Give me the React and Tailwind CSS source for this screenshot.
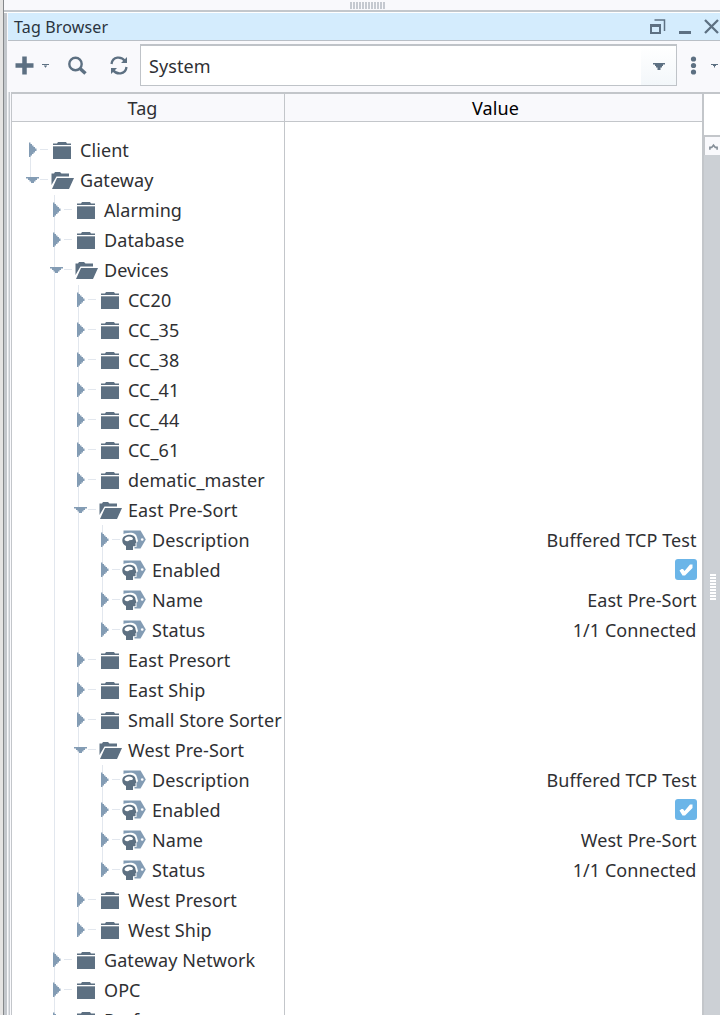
import React from "react";

const rows = [
  [0, "f", "Client"],
  [0, "o", "Gateway"],
  [1, "f", "Alarming"],
  [1, "f", "Database"],
  [1, "o", "Devices"],
  [2, "f", "CC20"],
  [2, "f", "CC_35"],
  [2, "f", "CC_38"],
  [2, "f", "CC_41"],
  [2, "f", "CC_44"],
  [2, "f", "CC_61"],
  [2, "f", "dematic_master"],
  [2, "o", "East Pre-Sort"],
  [3, "t", "Description", "Buffered TCP Test"],
  [3, "t", "Enabled", true],
  [3, "t", "Name", "East Pre-Sort"],
  [3, "t", "Status", "1/1 Connected"],
  [2, "f", "East Presort"],
  [2, "f", "East Ship"],
  [2, "f", "Small Store Sorter"],
  [2, "o", "West Pre-Sort"],
  [3, "t", "Description", "Buffered TCP Test"],
  [3, "t", "Enabled", true],
  [3, "t", "Name", "West Pre-Sort"],
  [3, "t", "Status", "1/1 Connected"],
  [2, "f", "West Presort"],
  [2, "f", "West Ship"],
  [1, "f", "Gateway Network"],
  [1, "f", "OPC"],
  [1, "f", "Performance"],
];

function Icon({ kind }) {
  if (kind === "f")
    return (
      <svg width="24" height="30" viewBox="0 0 24 30" className="block shrink-0">
        <path d="M3 8.500h4l1-1.500h8l1 1.500h4V10H3z" fill="#5d7082" />
        <path d="M3 11.300h18V24H3z" fill="#5d7082" />
      </svg>
    );
  if (kind === "o")
    return (
      <svg width="24" height="30" viewBox="0 0 24 30" className="block shrink-0">
        <path d="M1.500 20V8.500H4L5 7h5l1.500 1.500H19V11.500H6.500z" fill="#5d7082" />
        <path d="M7 13h17l-5 11H2z" fill="#5d7082" />
      </svg>
    );
  return (
    <svg width="24" height="30" viewBox="0 0 24 30" className="block shrink-0">
      <path d="M1.500 5.500H18.500L23.800 14.500 18.500 23.500H1.500z" fill="#839cb4" />
      <circle cx="20.200" cy="14.500" r="1.300" fill="#fff" />
      <path d="M0 9.500C3 8 10 6.500 13 9c2 1.500 2 4 3 7l-1.500 2v4h-2V26H0z" fill="#fff" />
      <path d="M4 25v-4C1.500 20 .3 18 .3 15.500.3 12 3.500 9.800 7.500 9.800c4 0 6 2.200 6 4.700l1 3-1 .8v3H11V25z" fill="#5d7082" />
      <path d="M2.500 15C2.500 13 4.500 11.500 7 11.500c2.500 0 4 1 4 2.300-.3 1.500-2 1.400-3.700 1.400-.8 1.500-3 1.500-4.800-.2z" fill="#fff" />
    </svg>
  );
}

function Branch({ open, first, last }) {
  return (
    <svg width="24" height="30" viewBox="0 0 24 30" className="block shrink-0">
      <path d={first ? "M4.500 15V30" : last ? "M4.500 0V15" : "M4.500 0V30"} stroke="#e2e7ee" />
      <path d="M14 14.500h8" stroke="#e2e7ee" />
      {open ? (
        <path d="M0 12h13v1.500h-2V15H9.500v1.500H8V18H5v-1.500H3.500V15H2v-1.500H0z" fill="#839cb4" />
      ) : (
        <path d="M3 7.500h1.500V9H6v1.500h1.500V12H9v1.500h1.500V16H9v1.500H7.500V19H6v1.500H4.500V22H3z" fill="#839cb4" />
      )}
    </svg>
  );
}

function Row({ index, row }) {
  const [depth, kind, label, value] = row;
  const continues = (level) => {
    for (let i = index + 1; i < rows.length; i++) {
      if (rows[i][0] < level) return false;
      if (rows[i][0] === level) return true;
    }
    return false;
  };
  const last = index < rows.length - 1 && !continues(depth);
  return (
    <div className="flex h-[30px] shrink-0">
      <div className="flex w-[272px] shrink-0 overflow-hidden pl-[14px]">
        {Array.from({ length: depth }, (_, level) => (
          <svg key={level} width="24" height="30" viewBox="0 0 24 30" className="block shrink-0">
            {continues(level) && <path d="M4.500 0V30" stroke="#e2e7ee" />}
          </svg>
        ))}
        <Branch open={kind === "o"} first={index === 0} last={last} />
        <Icon kind={kind} />
        <span className="pl-[6px] text-[18px] leading-[30px] tracking-[0.08px] whitespace-nowrap">{label}</span>
      </div>
      <div className="flex min-w-0 flex-1 items-center justify-end border-l border-[#c3c6ca] pr-[5.500px] text-[18px] leading-[30px] tracking-[0.06px]">
        {value === true ? (
          <svg width="22" height="22" viewBox="0 0 22 22" className="-mr-[0.500px] block">
            <rect width="22" height="21" rx="3" fill="#6bb5e8" />
            <path d="M4.500 11.500l2-1.500H8l1.500 2L15 5.500h2.500V9L10 16.500H7.500z" fill="#fff" />
          </svg>
        ) : (
          value
        )}
      </div>
    </div>
  );
}

function TitleBar() {
  return (
    <div className="flex h-[28px] shrink-0 items-center justify-between border-b border-[#b9bfc6] bg-[#d4ecfd] pl-[6px]">
      <span className="text-[16px] leading-[28px] tracking-[0.15px] text-[#2b3440]">Tag Browser</span>
      <svg width="72" height="28" viewBox="648 13 72 28" className="block" fill="none" stroke="#5d7082">
        <path d="M654.500 20h10v11" strokeWidth="1.500" />
        <path d="M651 25.500h9v7.500h-9z" strokeWidth="2" />
        <path d="M650 25.500h11" strokeWidth="3" />
        <path d="M679 32.500h12" strokeWidth="3" />
        <path d="M705 20l13 13M718 20l-13 13" strokeWidth="2.300" />
      </svg>
    </div>
  );
}

function Toolbar() {
  return (
    <div className="flex h-[51px] shrink-0 bg-[#f9f9fc]">
      <svg width="132" height="51" viewBox="8 41 132 51" className="block shrink-0" fill="none" stroke="#5d7082">
        <path d="M15.500 65.500h18M24.500 56.500v18" strokeWidth="4.500" />
        <path d="M42 64.500h7" strokeWidth="1" />
        <path d="M44 65.500h3v1h-1v1h-1v-1h-1z" fill="#5d7082" stroke="none" />
        <circle cx="75.500" cy="64" r="6.200" strokeWidth="2.400" />
        <path d="M80 68.500l5.500 5" strokeWidth="3.500" />
        <path d="M111.500 64c1-8 10-8 13.500-3M126.500 67c-1 8-10 8-13.500 3" strokeWidth="2.300" />
        <path d="M127 57v6h-6zM111 74v-6h6z" fill="#5d7082" stroke="none" />
      </svg>
      <div className="mt-[3px] flex h-[42px] w-[537px] shrink-0 justify-between border border-t-2 border-[#bfc3c8] bg-white pl-[8px]">
        <span className="text-[18px] leading-[41px] tracking-[0.1px]">System</span>
        <div className="flex w-[35px] items-center justify-center bg-linear-to-b from-white to-[#f3f7fa]">
          <svg width="12" height="7" viewBox="0 0 12 7" className="mt-px"><path d="M0 0h12v1.500h-2V3H9v1.500H7.500V7h-3V4.500H3V3H2V1.500H0z" fill="#5d7082" /></svg>
        </div>
      </div>
      <svg width="43" height="51" viewBox="677 41 43 51" className="block shrink-0" fill="#5d7082">
        <circle cx="693.500" cy="59" r="2.600" />
        <circle cx="693.500" cy="65.500" r="2.600" />
        <circle cx="693.500" cy="72" r="2.600" />
        <path d="M711 64h7v1h-2v1h-1v1.500h-1V66h-1v-1h-2z" />
      </svg>
    </div>
  );
}

export default function App() {
  return (
    <div className="flex h-[1015px] w-[720px] overflow-hidden bg-[#f9f9fc] font-['Noto_Sans',sans-serif] text-[#2f3033]">
      <div className="w-[4px] shrink-0 border-r border-[#85888b] bg-[#e5e4e3]" />
      <div className="flex w-[716px] shrink-0 flex-col">
        <div className="flex h-[10px] shrink-0 pt-[2px] pl-[346px]">
          <svg width="35" height="7" className="block"><path d="M0 3.500h35" stroke="#c5c9d0" strokeWidth="7" strokeDasharray="2 1" /></svg>
        </div>
        <div className="h-[3px] shrink-0 border-b border-white bg-[#c3c7cc]" />
        <div className="flex min-h-0 flex-1">
          <div className="w-[4px] shrink-0 border-r border-[#f9f9fc] bg-[#c3c7cc]" />
          <div className="flex w-[712px] shrink-0 flex-col">
            <TitleBar />
            <Toolbar />
            <div className="flex min-h-0 flex-1">
              <div className="mr-px w-[2px] shrink-0 border-r border-[#c5c9cf] bg-[#dfe2e6]" />
              <div className="flex w-[691px] shrink-0 flex-col border-t-2 border-l border-[#c3c6ca] bg-white">
                <div className="flex h-[28px] shrink-0 border-b border-[#c3c6ca] bg-[#f9f9fc] text-[18px] leading-[28px] tracking-[0.1px]">
                  <div className="w-[272px] shrink-0 pr-[11px] text-center">Tag</div>
                  <div className="flex-1 border-l border-[#c3c6ca] pl-[4px] text-center text-black">Value</div>
                </div>
                <div className="flex h-[13px] shrink-0">
                  <div className="w-[272px]" />
                  <div className="flex-1 border-l border-[#c3c6ca]" />
                </div>
                <div className="flex min-h-0 flex-1 flex-col overflow-hidden">
                  {rows.map((row, i) => (
                    <Row key={i} index={i} row={row} />
                  ))}
                </div>
              </div>
              <div className="flex w-[18px] shrink-0 flex-col border-t-2 border-l-2 border-[#c3c6ca] bg-[#ccd0d5]">
                <div className="h-[41px] shrink-0 bg-white" />
                <div className="flex h-[20px] shrink-0 items-center justify-center border-t-2 border-l border-[#c3c6ca] bg-[#f9f9fc]">
                  <svg width="9" height="7" viewBox="0 0 10 7" className="ml-px" fill="none" stroke="#858e98" strokeWidth="1.800"><path d="M1 7V4.500h2L5 2l2 2.500h2V7" /></svg>
                </div>
                <svg width="16" height="500" viewBox="0 0 16 500" className="block shrink-0">
                  <path d="M9 419v27" stroke="#fff" strokeWidth="6" strokeDasharray="2 1" />
                </svg>
              </div>
            </div>
          </div>
        </div>
      </div>
    </div>
  );
}
